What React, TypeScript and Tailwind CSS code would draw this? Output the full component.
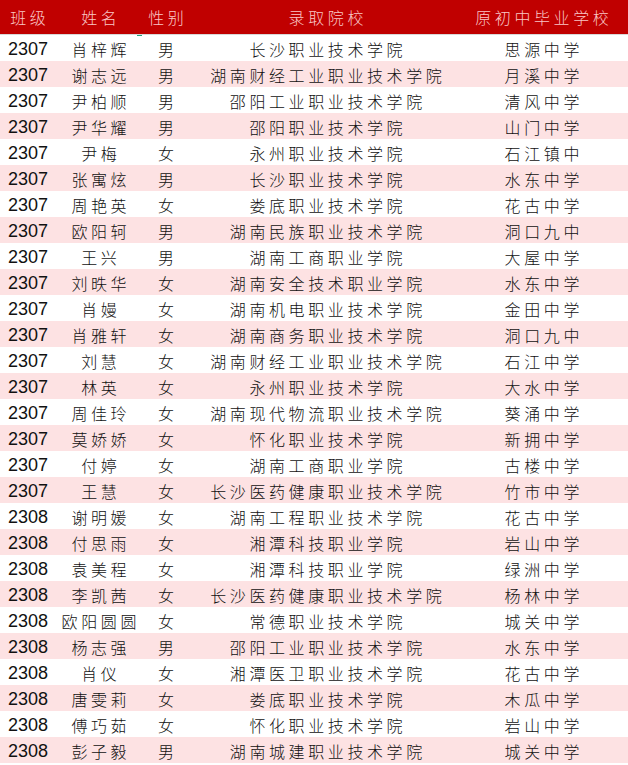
import React from "react";

const rows: [string, string, string, string, string][] = [
  ["2307", "肖梓辉", "男", "长沙职业技术学院", "思源中学"],
  ["2307", "谢志远", "男", "湖南财经工业职业技术学院", "月溪中学"],
  ["2307", "尹柏顺", "男", "邵阳工业职业技术学院", "清风中学"],
  ["2307", "尹华耀", "男", "邵阳职业技术学院", "山门中学"],
  ["2307", "尹梅", "女", "永州职业技术学院", "石江镇中"],
  ["2307", "张寓炫", "男", "长沙职业技术学院", "水东中学"],
  ["2307", "周艳英", "女", "娄底职业技术学院", "花古中学"],
  ["2307", "欧阳轲", "男", "湖南民族职业技术学院", "洞口九中"],
  ["2307", "王兴", "男", "湖南工商职业学院", "大屋中学"],
  ["2307", "刘昳华", "女", "湖南安全技术职业学院", "水东中学"],
  ["2307", "肖嫚", "女", "湖南机电职业技术学院", "金田中学"],
  ["2307", "肖雅轩", "女", "湖南商务职业技术学院", "洞口九中"],
  ["2307", "刘慧", "女", "湖南财经工业职业技术学院", "石江中学"],
  ["2307", "林英", "女", "永州职业技术学院", "大水中学"],
  ["2307", "周佳玲", "女", "湖南现代物流职业技术学院", "葵涌中学"],
  ["2307", "莫娇娇", "女", "怀化职业技术学院", "新拥中学"],
  ["2307", "付婷", "女", "湖南工商职业学院", "古楼中学"],
  ["2307", "王慧", "女", "长沙医药健康职业技术学院", "竹市中学"],
  ["2308", "谢明媛", "女", "湖南工程职业技术学院", "花古中学"],
  ["2308", "付思雨", "女", "湘潭科技职业学院", "岩山中学"],
  ["2308", "袁美程", "女", "湘潭科技职业学院", "绿洲中学"],
  ["2308", "李凯茜", "女", "长沙医药健康职业技术学院", "杨林中学"],
  ["2308", "欧阳圆圆", "女", "常德职业技术学院", "城关中学"],
  ["2308", "杨志强", "男", "邵阳工业职业技术学院", "水东中学"],
  ["2308", "肖仪", "女", "湘潭医卫职业技术学院", "花古中学"],
  ["2308", "唐雯莉", "女", "娄底职业技术学院", "木瓜中学"],
  ["2308", "傅巧茹", "女", "怀化职业技术学院", "岩山中学"],
  ["2308", "彭子毅", "男", "湖南城建职业技术学院", "城关中学"],
];

const cjk =
  "font-['Noto_Sans_CJK_SC',sans-serif] font-light text-[16px] leading-[26px] tracking-[3.6px] pl-[3.6px] whitespace-nowrap text-center";

export default function App() {
  return (
    <div className="relative w-[628px] h-[765px] bg-white overflow-hidden">
      <div className="grid grid-cols-[56px_86px_48px_272px_160px] h-[35px] bg-[#c00000] border-b border-[#d8d8d8] text-[#f9c6c6] items-center">
        <div className={cjk}>班级</div>
        <div className={cjk}>姓名</div>
        <div className={cjk}>性别</div>
        <div className={cjk}>录取院校</div>
        <div className={cjk}>原初中毕业学校</div>
      </div>
      <div className="flex flex-col">
        {rows.map((r, i) => (
          <div
            key={i}
            className={`grid grid-cols-[56px_86px_48px_272px_160px] h-[26px] items-center text-[#111] ${
              i % 2 === 1 ? "bg-[#fde2e3]" : "bg-white"
            }`}
          >
            <div className="text-center font-['Liberation_Sans',sans-serif] text-[18px] leading-[26px] pt-[1px]">{r[0]}</div>
            <div className={cjk}>{r[1]}</div>
            <div className={cjk}>{r[2]}</div>
            <div className={cjk}>{r[3]}</div>
            <div className={cjk}>{r[4]}</div>
          </div>
        ))}
      </div>
      <div className="absolute left-[137px] top-[35px] w-[5px] h-[1px] bg-[#1f9e7a]" />
    </div>
  );
}
